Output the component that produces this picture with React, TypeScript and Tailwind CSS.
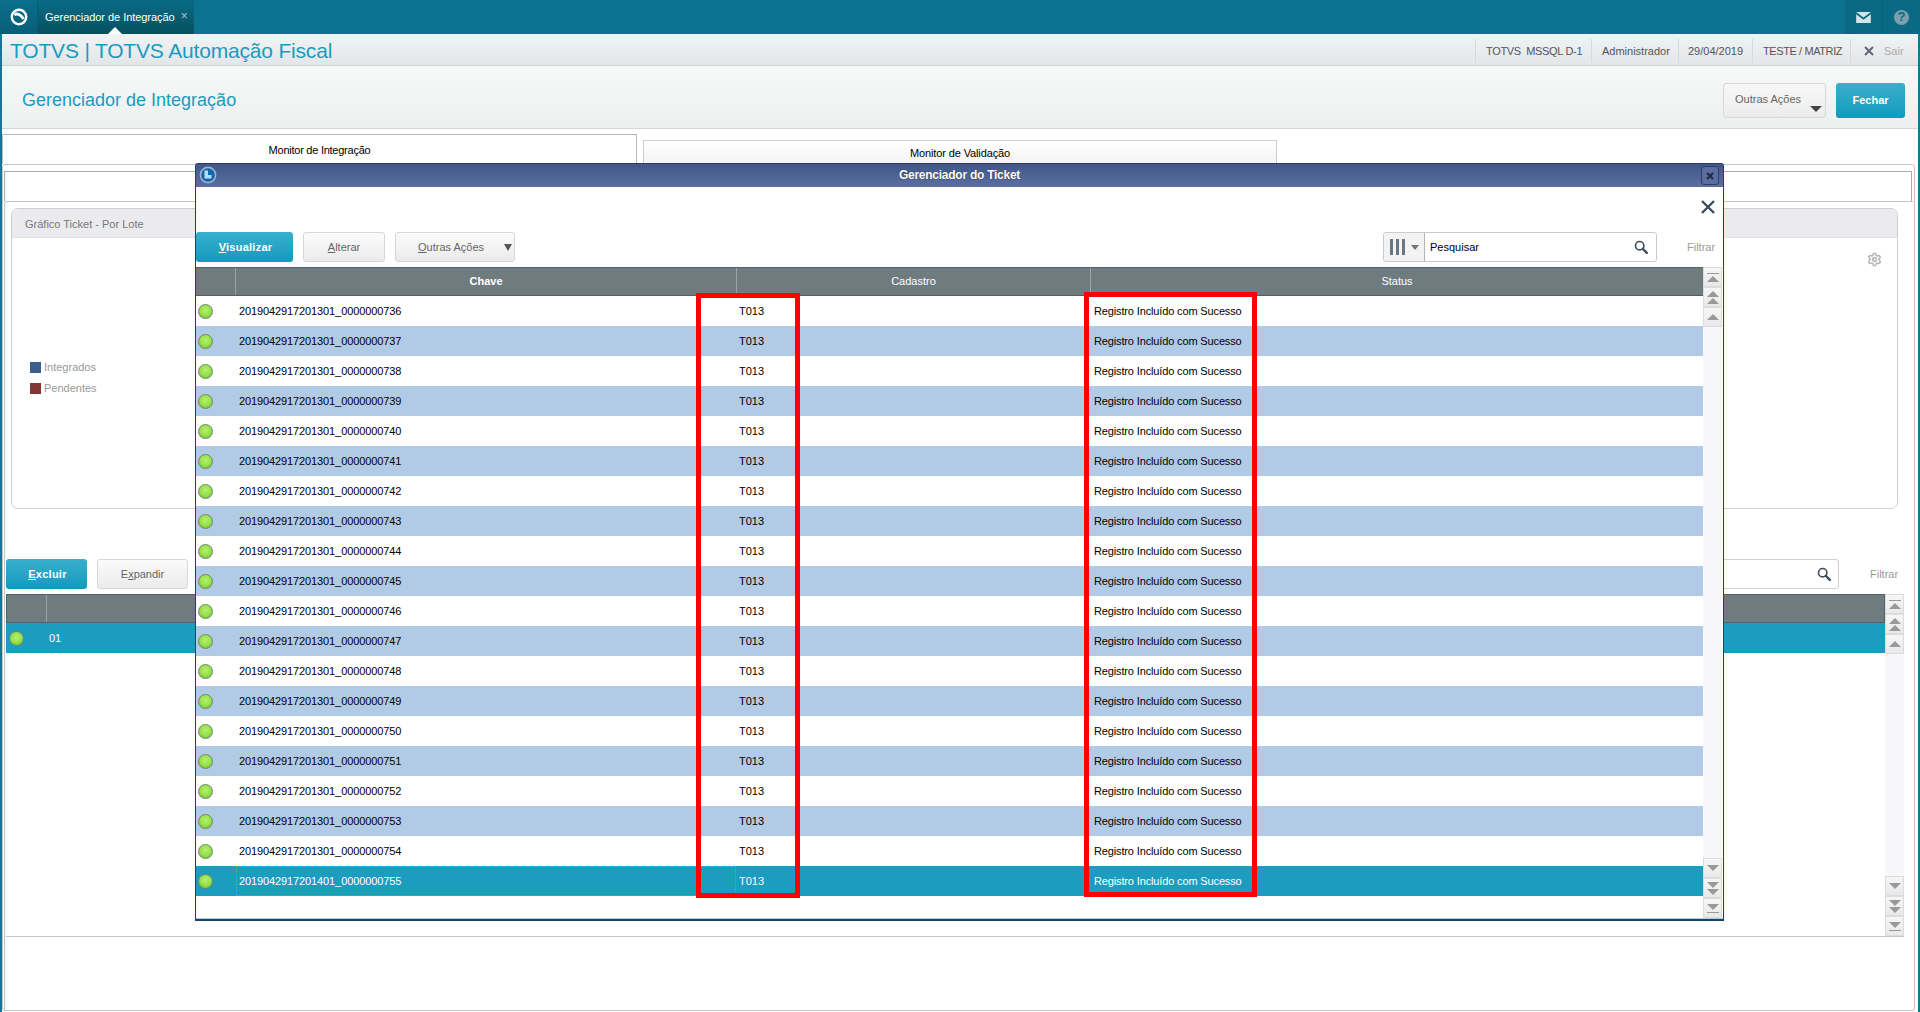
import React from "react";
import { Settings } from "lucide-react";

const KEYS = Array.from({ length: 20 }, (_, i) => {
  const n = String(736 + i).padStart(10, "0");
  return (i === 19 ? "2019042917201401_" : "2019042917201301_") + n;
});

function Dot() {
  return (
    <span className="block w-[15px] h-[15px] -ml-[1px] rounded-full border border-[#71876a] bg-[radial-gradient(circle_at_50%_40%,#b6f06c_0%,#97e24e_50%,#63b52c_100%)]" />
  );
}

function Tri({ dir, color = "#999" }: { dir: "up" | "down"; color?: string }) {
  return (
    <svg width="12" height="6" viewBox="0 0 12 6" className="block">
      <polygon points={dir === "up" ? "6,0 12,6 0,6" : "0,0 12,0 6,6"} fill={color} />
    </svg>
  );
}

function ScrollBtn({ kind, dir }: { kind: "end" | "page" | "one"; dir: "up" | "down" }) {
  return (
    <div className="h-[20px] shrink-0 flex flex-col items-center justify-center gap-[1px] border border-[#dcdcdc] bg-gradient-to-b from-[#f6f6f6] to-[#e9e9ec]">
      {kind === "end" && dir === "up" && <div className="w-[12px] h-[1px] bg-[#999] mb-[1px]" />}
      <Tri dir={dir} />
      {kind === "page" && <Tri dir={dir} />}
      {kind === "end" && dir === "down" && <div className="w-[12px] h-[1px] bg-[#999] mt-[1px]" />}
    </div>
  );
}

function ScrollBar() {
  return (
    <div className="w-[19px] shrink-0 flex flex-col justify-between bg-[#f7f7f9]">
      <div className="flex flex-col">
        <ScrollBtn kind="end" dir="up" />
        <ScrollBtn kind="page" dir="up" />
        <ScrollBtn kind="one" dir="up" />
      </div>
      <div className="flex flex-col">
        <ScrollBtn kind="one" dir="down" />
        <ScrollBtn kind="page" dir="down" />
        <ScrollBtn kind="end" dir="down" />
      </div>
    </div>
  );
}

function Search({ color = "#3f4c5c", size = 14 }: { color?: string; size?: number }) {
  return (
    <svg width={size} height={size} viewBox="0 0 16 16" className="block">
      <circle cx="6.5" cy="6.5" r="4.8" fill="none" stroke={color} strokeWidth="1.9" />
      <line x1="10" y1="10" x2="14.6" y2="14.6" stroke={color} strokeWidth="2.8" strokeLinecap="round" />
    </svg>
  );
}

function PrimaryBtn({ w, children }: { w: string; children: React.ReactNode }) {
  return (
    <button className={`${w} h-[30px] shrink-0 rounded-[3px] bg-gradient-to-b from-[#38afcc] to-[#0e9abf] text-white text-[11px] font-bold tracking-[0.25px] pl-[2px]`}>
      {children}
    </button>
  );
}

function SecBtn({ w, children }: { w: string; children: React.ReactNode }) {
  return (
    <button className={`${w} h-[30px] shrink-0 rounded-[3px] border border-[#d6d6d6] bg-gradient-to-b from-[#fbfbfb] to-[#ebebeb] text-[#666] text-[11px]`}>
      {children}
    </button>
  );
}

function Row({ k, i }: { k: string; i: number }) {
  const sel = i === 19;
  const bg = sel ? "bg-[#1c9dbf] text-white" : i % 2 ? "bg-[#b1cbe6] text-black" : "bg-white text-black";
  return (
    <div className={`h-[30px] flex items-center text-[11px] ${bg}`}>
      <div className="w-[40px] shrink-0 pl-[3px]">
        <Dot />
      </div>
      <div className={`w-[500px] shrink-0 h-full flex items-center ${sel ? "pl-[2px] border border-dotted border-[#d77a55]" : "pl-[3px]"}`}>
        <span className="tracking-[-0.11px]">{k}</span>
      </div>
      <div className="w-[354px] shrink-0 pl-[3px]">T013</div>
      <div className="flex-1 pl-[4px] tracking-[-0.14px]">Registro Incluído com Sucesso</div>
    </div>
  );
}

export default function App() {
  return (
    <div className="relative w-[1920px] h-[1012px] overflow-hidden bg-white flex flex-col font-['Liberation_Sans',Arial,sans-serif]">
      {/* top bar */}
      <div className="h-[34px] shrink-0 flex bg-[#0b7290]">
        <div className="w-[38px] flex items-center justify-center bg-gradient-to-b from-[#0a6f8c] to-[#085e77] border-r border-[#075a72]">
          <svg width="18" height="18" viewBox="0 0 18 18" className="block">
            <circle cx="9" cy="9" r="7.2" fill="none" stroke="#fff" strokeWidth="2.4" />
            <path d="M4.500 7 C7 4.800 11 6.500 13.500 11" fill="none" stroke="#fff" strokeWidth="2.8" />
          </svg>
        </div>
        <div className="relative w-[156px] flex items-center pl-[7px] bg-gradient-to-b from-[#0a6c88] to-[#06505f] text-white text-[11px]">
          <span className="tracking-[-0.05px]">Gerenciador de Integração</span>
          <span className="ml-[6px] -mt-[2px] text-[#a9c6d0] text-[12px]">×</span>
          <span className="absolute bottom-0 left-[70px] w-0 h-0 border-l-[7px] border-r-[7px] border-b-[7px] border-l-transparent border-r-transparent border-b-white" />
        </div>
        <div className="flex-1" />
        <div className="w-[38px] flex items-center justify-center bg-[#0a6a86] border-r border-[#08607a]">
          <svg width="15" height="11" viewBox="0 0 16 12" className="block">
            <path d="M0 0 H16 L8 6 Z" fill="#d3e4ea" />
            <path d="M0 2.400 L8 8.400 L16 2.400 V12 H0 Z" fill="#d3e4ea" />
          </svg>
        </div>
        <div className="w-[37px] flex items-center justify-center bg-[#0a6a86]">
          <span className="w-[15px] h-[15px] rounded-full bg-[#7d9eab] text-[#0a6a86] text-[13px] font-bold flex items-center justify-center">?</span>
        </div>
      </div>

      <div className="flex-1 flex flex-col border-x-2 border-[#0b7b96] min-h-0">
        {/* app header */}
        <div className="h-[32px] shrink-0 flex items-center bg-gradient-to-b from-[#f1f3f4] to-[#e3e6e8] border-b border-[#cfd2d4] pl-[8px] pt-[3px]">
          <span className="text-[21px] text-[#1b9bbf] tracking-[-0.18px]">TOTVS | TOTVS Automação Fiscal</span>
          <div className="flex-1" />
          <div className="flex items-center h-[24px] text-[11px] text-[#555]">
            <span className="w-[116px] h-full flex items-center pl-[10px] border-l border-[#d6d8da] whitespace-pre tracking-[-0.33px]">TOTVS  MSSQL D-1</span>
            <span className="w-[87px] h-full flex items-center pl-[10px] border-l border-[#d6d8da]">Administrador</span>
            <span className="w-[74px] h-full flex items-center pl-[9px] border-l border-[#d6d8da]">29/04/2019</span>
            <span className="w-[98px] h-full flex items-center pl-[10px] border-l border-[#d6d8da] tracking-[-0.4px]">TESTE / MATRIZ</span>
            <span className="w-[68px] h-full flex items-center pl-[13px] border-l border-[#d6d8da] text-[#aaa] gap-[10px]">
              <svg width="10" height="10" viewBox="0 0 10 10" className="block">
                <path d="M1 1 L9 9 M9 1 L1 9" stroke="#5c6675" strokeWidth="2" />
              </svg>
              Sair
            </span>
          </div>
        </div>
        {/* page header */}
        <div className="h-[63px] shrink-0 flex items-center bg-gradient-to-b from-[#f7f8f8] to-[#eeefef] border-b border-[#d5d5d5] pl-[20px] pr-[13px] pt-[6px]">
          <span className="text-[18px] text-[#1b9bbf]">Gerenciador de Integração</span>
          <div className="flex-1" />
          <button className="relative w-[103px] h-[35px] rounded-[3px] border border-[#d8d8d8] bg-gradient-to-b from-[#f8f8f8] to-[#ececec] text-[#666] text-[11px] text-left pl-[11px] pb-[2px]">
            Outras Ações
            <span className="absolute right-[3px] bottom-[5px]">
              <Tri dir="down" color="#444" />
            </span>
          </button>
          <button className="ml-[10px] w-[69px] h-[35px] rounded-[3px] bg-gradient-to-b from-[#38afcc] to-[#0e9abf] text-white text-[11px] font-bold">
            Fechar
          </button>
        </div>
        {/* tabs */}
        <div className="h-[35px] shrink-0 flex items-end gap-[6px]">
          <div className="w-[635px] h-[30px] border border-b-0 border-[#b8b8b8] bg-white flex items-center justify-center text-[11px] text-black pt-[1px] tracking-[-0.25px]">
            Monitor de Integração
          </div>
          <div className="w-[634px] h-[24px] border border-b-0 border-[#cfcfcf] bg-gradient-to-b from-white to-[#f4f4f4] flex items-center justify-center text-[11px] text-black pt-[2px] tracking-[-0.12px]">
            Monitor de Validação
          </div>
        </div>
        {/* main panel */}
        <div className="flex-1 min-h-0 mb-[1px] mr-[3px] rounded-[3px] border border-[#c4c4c4] pl-[1px] pr-[1px] pt-[6px] pb-0 flex flex-col">
          <div className="h-[30px] shrink-0 mr-[1px] border border-b-0 border-[#aaa] bg-white" />
          <div className="flex-1 min-h-0 rounded-tl-[3px] border-t border-l border-[#c4c4c4] flex flex-col pl-[1px]">
            <div className="shrink-0 h-[301px] mt-[6px] ml-[5px] mr-[15px] rounded-[7px] border border-[#cfcfcf] flex flex-col">
              <div className="h-[29px] shrink-0 flex items-center pl-[13px] pt-[2px] bg-[#ebebef] rounded-t-[7px] border-b border-[#e2e2e2] text-[11px] text-[#777]">
                Gráfico Ticket - Por Lote
              </div>
              <div className="flex-1 flex flex-col items-end pr-[15px] pt-[14px]">
                <Settings size={15} color="#b8b8b8" strokeWidth={2.6} className="block" />
                <div className="self-start ml-[18px] mt-[95px] flex flex-col gap-[10px] text-[11px] text-[#999]">
                  <div className="flex items-center gap-[3px] h-[11px]">
                    <span className="w-[11px] h-[11px] bg-[#3b5f8a]" />
                    Integrados
                  </div>
                  <div className="flex items-center gap-[3px] h-[11px]">
                    <span className="w-[11px] h-[11px] bg-[#843535]" />
                    Pendentes
                  </div>
                </div>
              </div>
            </div>
            <div className="h-[30px] shrink-0 mt-[50px] flex items-center gap-[10px]">
              <PrimaryBtn w="w-[81px]">
                <span className="underline">E</span>xcluir
              </PrimaryBtn>
              <SecBtn w="w-[91px]">
                E<span className="underline">x</span>pandir
              </SecBtn>
              <div className="flex-1" />
              <div className="w-[120px] h-full rounded-r-[3px] border border-[#cfcfcf] flex items-center justify-end pr-[7px]">
                <Search />
              </div>
              <span className="ml-[21px] mr-[16px] text-[11px] text-[#999] w-[27px]">Filtrar</span>
            </div>
            <div className="h-[343px] shrink-0 mt-[5px] border-b border-[#c4c4c4] flex mr-[9px]">
              <div className="flex-1 flex flex-col min-w-0">
                <div className="h-[29px] shrink-0 flex bg-[#6e7c80] border border-[#565f63]">
                  <div className="w-[40px] border-r border-[#9aa3a6]" />
                </div>
                <div className="h-[30px] shrink-0 flex items-center bg-[#1c9dbf] text-white text-[11px]">
                  <div className="w-[43px] pl-[4px]">
                    <Dot />
                  </div>
                  01
                </div>
              </div>
              <ScrollBar />
            </div>
          </div>
        </div>
      </div>

      {/* modal window */}
      <div className="absolute left-[195px] top-[163px] w-[1529px] h-[758px] rounded-t-[3px] border-x border-b-2 border-t border-x-[#0c4a6e] border-b-[#0c4a6e] border-t-[#333c4c] bg-white flex flex-col">
        <div className="relative h-[23px] shrink-0 bg-gradient-to-b from-[#3f5789] to-[#5c6f9f] flex items-center justify-center pb-[2px] text-white text-[12px] font-bold tracking-[-0.25px] [text-shadow:0_0_1px_#222]">
          Gerenciador do Ticket
          <svg width="18" height="18" viewBox="0 0 18 18" className="absolute left-[3px] top-[2px] block">
            <circle cx="9" cy="9" r="8.4" fill="#9fb3c7" />
            <circle cx="9" cy="9" r="6.8" fill="#0d69b4" />
            <path d="M5.500 4.500 H9 V9 H12.500 V12.500 H5.500 Z" fill="#bcdcf2" />
          </svg>
          <span className="absolute right-[4px] top-[2px] w-[18px] h-[19px] rounded-[3px] border border-[#2d3f68] bg-[#5b6d9e] flex items-center justify-center">
            <svg width="8" height="8" viewBox="0 0 8 8" className="block">
              <path d="M1 1 L7 7 M7 1 L1 7" stroke="#1f2a44" strokeWidth="2" />
            </svg>
          </span>
        </div>
        <div className="h-[45px] shrink-0 flex items-start justify-end pr-[8px] pt-[13px]">
          <svg width="14" height="14" viewBox="0 0 14 14" className="block">
            <path d="M1 1 L13 13 M13 1 L1 13" stroke="#3d4a5c" strokeWidth="2.4" />
          </svg>
        </div>
        <div className="h-[30px] shrink-0 flex items-center gap-[10px]">
          <PrimaryBtn w="w-[97px]">
            <span className="underline">V</span>isualizar
          </PrimaryBtn>
          <SecBtn w="w-[82px]">
            <span className="underline">A</span>lterar
          </SecBtn>
          <button className="relative w-[120px] h-[30px] rounded-[3px] border border-[#d6d6d6] bg-gradient-to-b from-[#fbfbfb] to-[#ebebeb] text-[#666] text-[11px] text-left pl-[22px]">
            <span className="underline">O</span>utras Ações
            <span className="absolute right-[2px] top-[11px]">
              <svg width="8" height="7" viewBox="0 0 8 7" className="block">
                <polygon points="0,0 8,0 4,7" fill="#555" />
              </svg>
            </span>
          </button>
          <div className="flex-1" />
          <div className="w-[274px] -mr-[1px] h-full rounded-[3px] border border-[#cbcbcb] flex items-center">
            <div className="w-[41px] h-full rounded-l-[3px] border-r border-[#b5b5b5] bg-[#f3f3f3] flex items-center justify-center gap-[6px] pl-[1px]">
              <svg width="15" height="16" viewBox="0 0 15 16" className="block">
                <rect x="0" y="0" width="3" height="16" fill="#6a7682" />
                <rect x="6" y="0" width="3" height="16" fill="#6a7682" />
                <rect x="12" y="0" width="3" height="16" fill="#6a7682" />
              </svg>
              <svg width="8" height="5" viewBox="0 0 8 5" className="block">
                <polygon points="0,0 8,0 4,5" fill="#6a7682" />
              </svg>
            </div>
            <span className="flex-1 pl-[5px] text-[11px] text-black">Pesquisar</span>
            <span className="pr-[8px]">
              <Search />
            </span>
          </div>
          <span className="ml-[21px] mr-[9px] w-[27px] text-[11px] text-[#999]">Filtrar</span>
        </div>
        <div className="flex-1 min-h-0 mt-[5px] flex border-b border-[#c8c8c8]">
          <div className="flex-1 min-w-0 flex flex-col">
            <div className="h-[29px] shrink-0 flex items-center bg-[#6e7c80] border-t border-b border-[#565f63] text-white text-[11px]">
              <div className="w-[40px] h-full border-r border-[#9aa3a6]" />
              <div className="w-[501px] h-full flex items-center justify-center font-bold border-r border-[#9aa3a6]">Chave</div>
              <div className="w-[354px] h-full flex items-center justify-center border-r border-[#9aa3a6]">Cadastro</div>
              <div className="flex-1 h-full flex items-center justify-center">Status</div>
            </div>
            {KEYS.map((k, i) => (
              <Row key={k} k={k} i={i} />
            ))}
          </div>
          <div className="w-[20px] shrink-0 flex">
            <ScrollBar />
          </div>
        </div>
      </div>

      {/* red annotation boxes */}
      <div className="absolute left-[696px] top-[293px] w-[104px] h-[605px] border-[5px] border-[#ff0000]" />
      <div className="absolute left-[1084px] top-[292px] w-[173px] h-[605px] border-[5px] border-[#ff0000]" />
    </div>
  );
}
